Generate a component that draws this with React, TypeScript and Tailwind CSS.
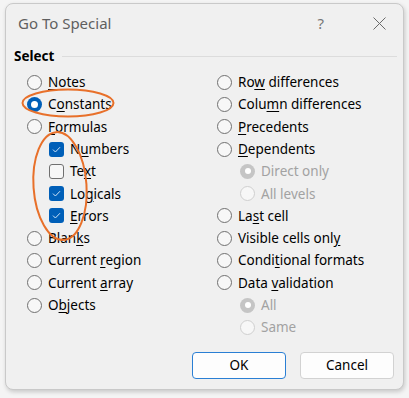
import React from "react"

type Opt = {
  pre: string
  key: string
  post: string
  kind: "radio" | "check"
  on?: boolean
  sub?: boolean
  disabled?: boolean
}

const left: Opt[] = [
  { pre: "", key: "N", post: "otes", kind: "radio" },
  { pre: "C", key: "o", post: "nstants", kind: "radio", on: true },
  { pre: "", key: "F", post: "ormulas", kind: "radio" },
  { pre: "N", key: "u", post: "mbers", kind: "check", on: true, sub: true },
  { pre: "Te", key: "x", post: "t", kind: "check", sub: true },
  { pre: "Lo", key: "g", post: "icals", kind: "check", on: true, sub: true },
  { pre: "", key: "E", post: "rrors", kind: "check", on: true, sub: true },
  { pre: "Blan", key: "k", post: "s", kind: "radio" },
  { pre: "Current ", key: "r", post: "egion", kind: "radio" },
  { pre: "Current ", key: "a", post: "rray", kind: "radio" },
  { pre: "O", key: "b", post: "jects", kind: "radio" },
]

const right: Opt[] = [
  { pre: "Ro", key: "w", post: " differences", kind: "radio" },
  { pre: "Colu", key: "m", post: "n differences", kind: "radio" },
  { pre: "", key: "P", post: "recedents", kind: "radio" },
  { pre: "", key: "D", post: "ependents", kind: "radio" },
  { pre: "Direct only", key: "", post: "", kind: "radio", on: true, sub: true, disabled: true },
  { pre: "All levels", key: "", post: "", kind: "radio", sub: true, disabled: true },
  { pre: "La", key: "s", post: "t cell", kind: "radio" },
  { pre: "Visible cells onl", key: "y", post: "", kind: "radio" },
  { pre: "Condi", key: "t", post: "ional formats", kind: "radio" },
  { pre: "Data ", key: "v", post: "alidation", kind: "radio" },
  { pre: "All", key: "", post: "", kind: "radio", on: true, sub: true, disabled: true },
  { pre: "Same", key: "", post: "", kind: "radio", sub: true, disabled: true },
]

function Radio({ on, disabled }: { on?: boolean; disabled?: boolean }) {
  if (disabled) {
    return on ? (
      <span className="flex h-[15px] w-[15px] items-center justify-center rounded-full bg-[#c5c5c5]">
        <span className="h-[6px] w-[6px] rounded-full bg-white" />
      </span>
    ) : (
      <span className="h-[15px] w-[15px] rounded-full border border-[#cfcfcf] bg-[#f7f7f7]" />
    )
  }
  return on ? (
    <span className="flex h-[15px] w-[15px] items-center justify-center rounded-full bg-[#005fb8]">
      <span className="h-[7px] w-[7px] rounded-full bg-white" />
    </span>
  ) : (
    <span className="h-[15px] w-[15px] rounded-full border border-[#707070] bg-[#f7f7f7]" />
  )
}

function Check({ on }: { on?: boolean }) {
  return on ? (
    <span className="flex h-[15px] w-[15px] items-center justify-center rounded-[3px] bg-[#005fb8]">
      <svg width="9" height="7" viewBox="0 0 9 7">
        <path d="M1 3.6 L3.4 6 L8 1.2" fill="none" stroke="#cfe3f7" strokeWidth="1" />
      </svg>
    </span>
  ) : (
    <span className="h-[15px] w-[15px] rounded-[3px] border border-[#707070] bg-[#f7f7f7]" />
  )
}

function Row({ o }: { o: Opt }) {
  return (
    <div className={`flex h-[22.3px] items-center ${o.sub ? (o.kind === "check" ? "pl-[22px]" : "pl-[23px]") : ""}`}>
      {o.kind === "radio" ? <Radio on={o.on} disabled={o.disabled} /> : <Check on={o.on} />}
      <span className={`ml-[6px] whitespace-pre ${o.disabled ? "text-[#a2a2a2]" : "text-black"}`}>
        {o.pre}
        {o.key && <span className="underline underline-offset-[2px]">{o.key}</span>}
        {o.post}
      </span>
    </div>
  )
}

export default function App() {
  return (
    <div className="h-[398px] w-[409px] bg-[#f4f4f4] pl-[5px] pt-[3px] font-['Noto_Sans',sans-serif] text-[13.5px]">
      <div className="relative h-[387px] w-[399px] rounded-[8px] border border-[#c9c9c9] bg-[#f0f0f0] shadow-[1px_2px_4px_rgba(0,0,0,0.18)]">
        <div className="flex h-[38px] items-center pl-[12px]">
          <span className="text-[15px] text-[#5f5f5f]">Go To Special</span>
          <span className="ml-auto text-[15px] text-[#777]">?</span>
          <span className="ml-[48px] mr-[17px] flex h-[14px] w-[14px] items-center justify-center">
            <svg width="13" height="13" viewBox="0 0 13 13">
              <path d="M0.5 0.5 L12.5 12.5 M12.5 0.5 L0.5 12.5" stroke="#6a6a6a" strokeWidth="1" />
            </svg>
          </span>
        </div>
        <div className="flex h-[29px] items-center pl-[8px] pr-[6px]">
          <span className="font-bold text-black">Select</span>
          <span className="ml-[8px] h-px flex-1 bg-[#dcdcdc]" />
        </div>
        <div className="flex pl-[21px]">
          <div className="w-[190px]">
            {left.map((o, i) => (
              <Row key={i} o={o} />
            ))}
          </div>
          <div>
            {right.map((o, i) => (
              <Row key={i} o={o} />
            ))}
          </div>
        </div>
        <div className="flex justify-end gap-[14px] pr-[9px] pt-[13px]">
          <button className="h-[27px] w-[94px] rounded-[4px] border-[1.5px] border-[#2a7fd4] bg-[#fdfdfd] text-[13.5px] text-black">
            OK
          </button>
          <button className="h-[27px] w-[94px] rounded-[4px] border border-[#d2d2d2] bg-[#fdfdfd] text-[13.5px] text-black">
            Cancel
          </button>
        </div>
        <svg className="pointer-events-none absolute left-0 top-0" width="399" height="387">
          <ellipse cx="62" cy="99" rx="45.5" ry="13.5" fill="none" stroke="#e8702a" strokeWidth="2" />
          <ellipse cx="54" cy="182" rx="26.5" ry="54" transform="rotate(-4 54 182)" fill="none" stroke="#e8702a" strokeWidth="2" />
        </svg>
      </div>
    </div>
  )
}
